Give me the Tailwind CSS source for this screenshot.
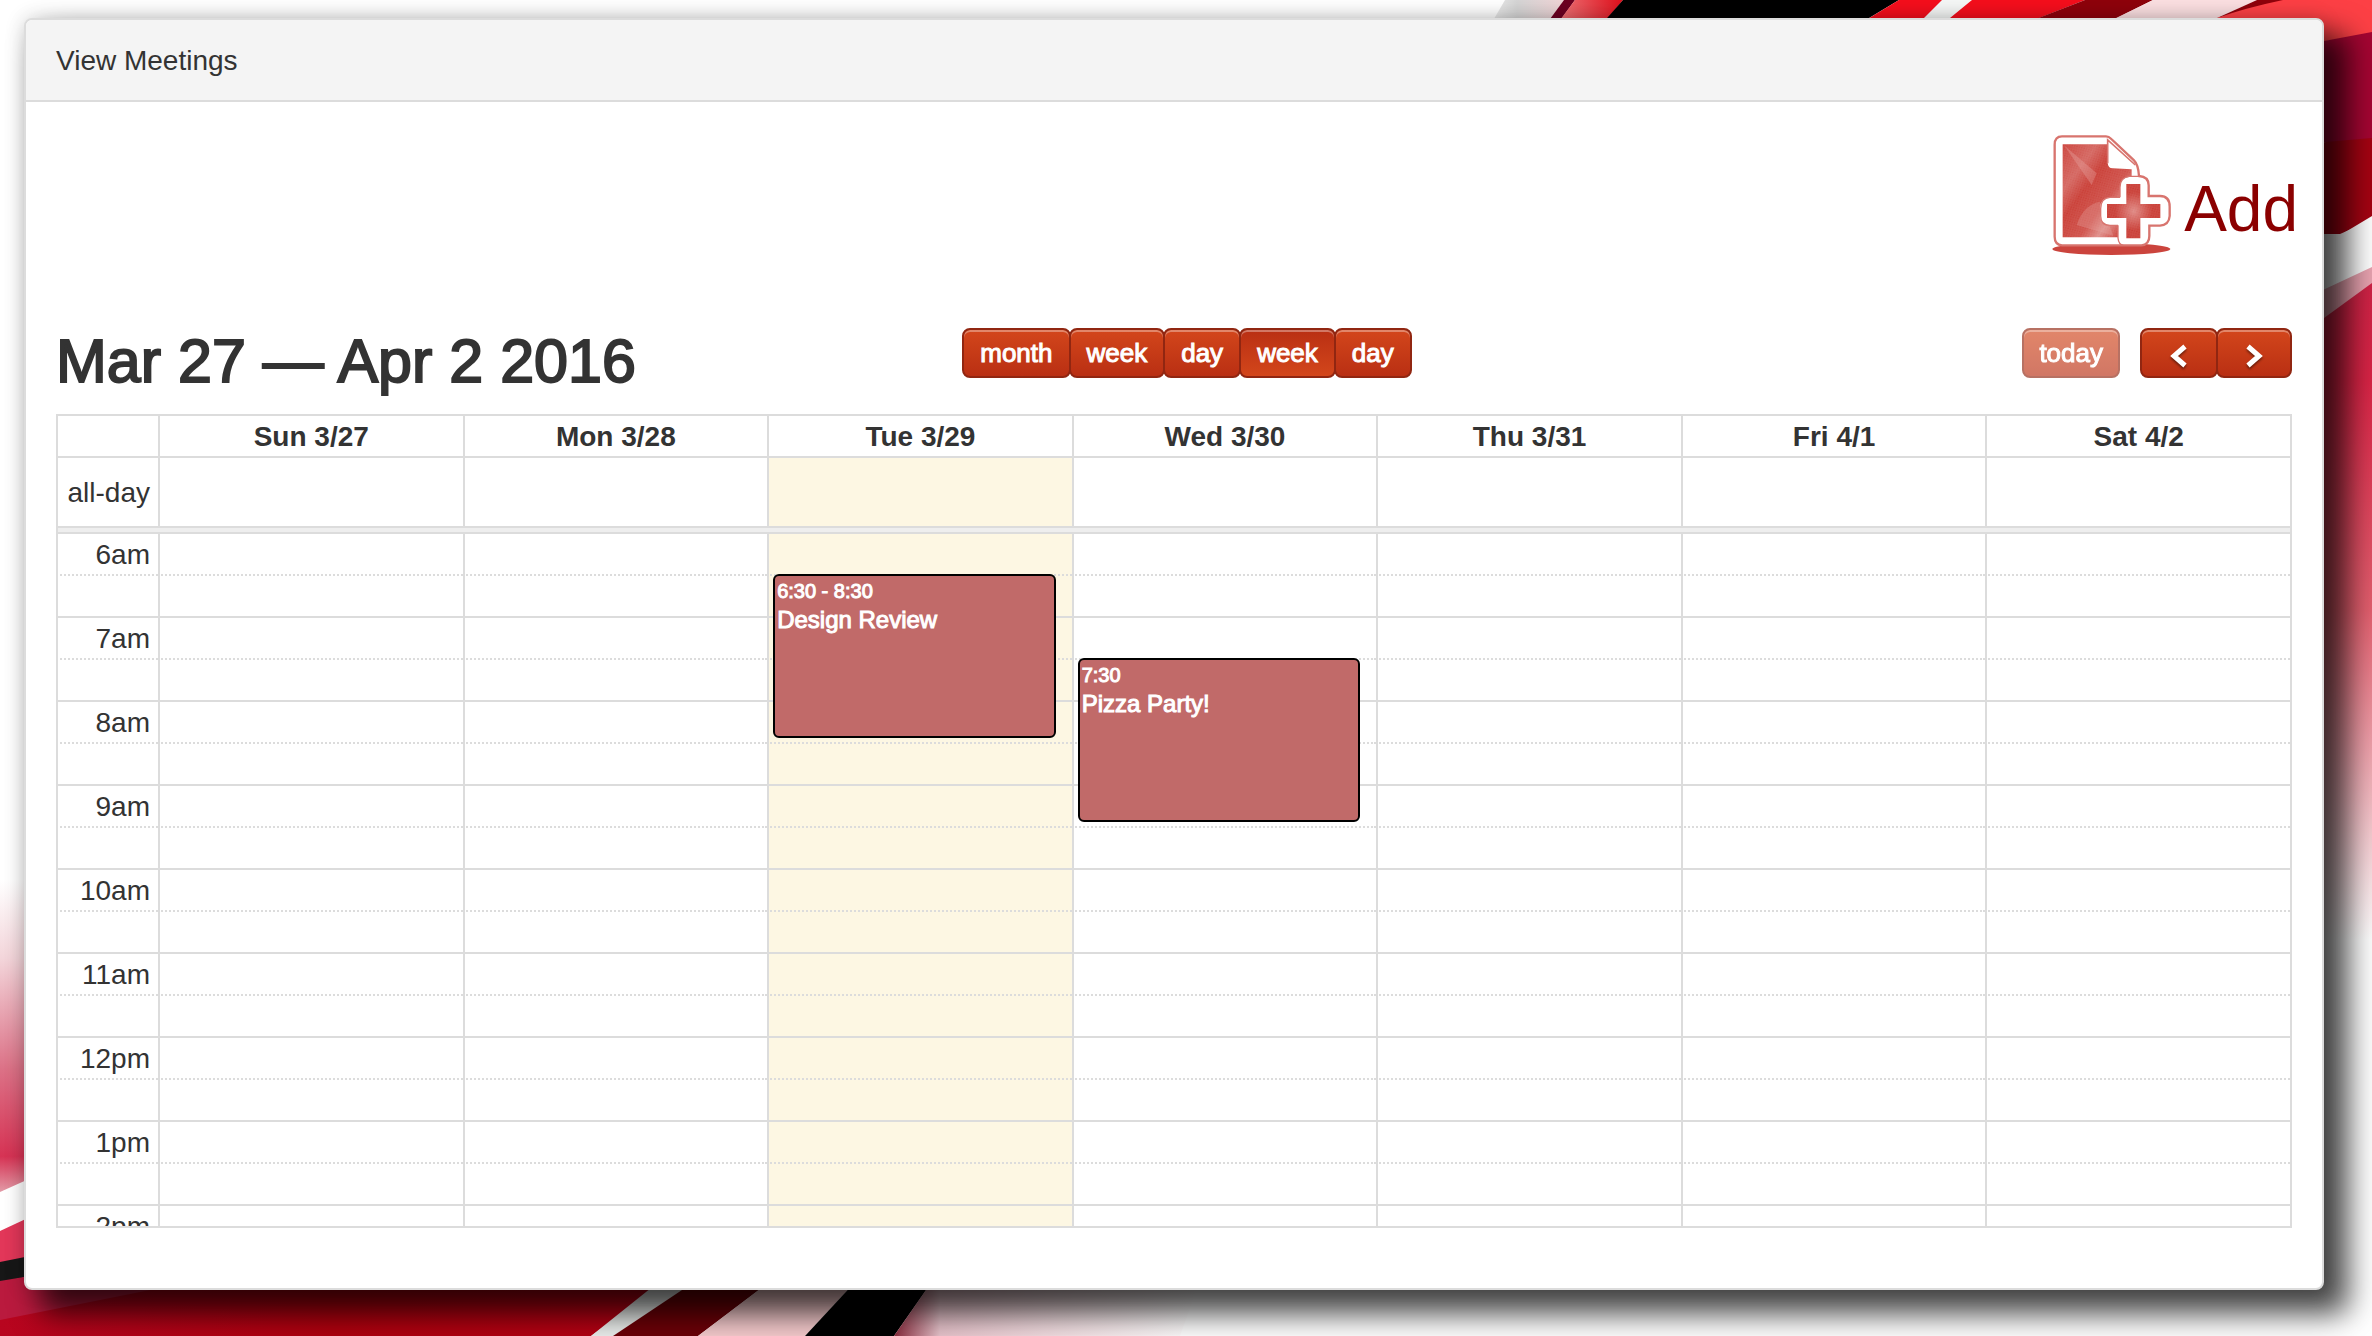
<!DOCTYPE html>
<html lang="en">
<head>
<meta charset="utf-8">
<title>View Meetings</title>
<script src="https://cdn.jsdelivr.net/npm/@tailwindcss/browser@4"></script>
</head>
<body class="relative min-h-screen bg-white font-['Liberation_Sans',Arial,sans-serif] text-[28px] text-[#333]">

<!-- Abstract ribbon wallpaper -->
<svg class="absolute inset-0 -z-10 h-full w-full" viewBox="0 0 2372 1336" preserveAspectRatio="none" aria-hidden="true">
  <defs>
    <linearGradient id="left" x1="0" y1="0" x2="0" y2="1"><stop offset="0" stop-color="#fff"/><stop offset=".25" stop-color="#f3d5da"/><stop offset=".6" stop-color="#dc7287"/><stop offset=".88" stop-color="#d63354"/><stop offset="1" stop-color="#e3a0ab"/></linearGradient>
    <linearGradient id="right" x1="0" y1="0" x2="0" y2="1"><stop offset="0" stop-color="#cf2346"/><stop offset=".15" stop-color="#da2446"/><stop offset=".5" stop-color="#e4606f"/><stop offset=".7" stop-color="#f0a0aa"/><stop offset="1" stop-color="#fff"/></linearGradient>
    <linearGradient id="top"><stop offset="0" stop-color="#f6a0a0"/><stop offset="1" stop-color="#e0101c"/></linearGradient>
    <linearGradient id="grey"><stop offset="0" stop-color="#fff"/><stop offset=".5" stop-color="#d5d5d5"/><stop offset="1" stop-color="#f0d4d6"/></linearGradient>
    <linearGradient id="bottom"><stop offset="0" stop-color="#8a2a3c"/><stop offset=".15" stop-color="#e8c4cc"/><stop offset=".5" stop-color="#f3dde1"/><stop offset="1" stop-color="#fff"/></linearGradient>
    <linearGradient id="red"><stop offset="0" stop-color="#b8051f"/><stop offset=".5" stop-color="#b0000e"/><stop offset="1" stop-color="#b50014"/></linearGradient>
  </defs>
  <path fill="url(#grey)" d="M1505 0H1564L1552 18 1520 60H1470z"/>
  <path fill="#6d0022" d="M1564 0H1575L1562 18 1530 60H1520z"/>
  <path fill="url(#top)" d="M1575 0H1623L1608 18 1570 60H1530z"/>
  <path d="M1623 0H1899L1869 18 1800 60H1570z"/>
  <path fill="#f50f1d" d="M1899 0H2085L2039 18 1930 60H1800z"/>
  <path fill="#f5f7f6" d="M1942 0H1972L1950 18 1900 60H1882z"/>
  <path fill="#8f030c" d="M2085 0H2153L2117 18 2030 60H1930z"/>
  <path fill="#fbdfe1" d="M2153 0H2257L2217 18 2120 60H2030z"/>
  <path fill="#8f030c" d="M2257 0H2300L2217 18z"/>
  <path fill="#fd4045" d="M2283 0H2372V34L2320 42 2200 60 2217 18Q2245 8 2283 0z"/>
  <path fill="#a50532" d="M2372 32V142H2280V48L2324 41z"/>
  <path fill="#a50312" d="M2280 146L2372 138V220L2340 234H2280z"/>
  <path fill="#fff" d="M2280 234H2342L2372 216V267L2280 310z"/>
  <path fill="#e9a3b0" d="M2280 310L2372 267V285L2280 350z"/>
  <path fill="url(#right)" d="M2280 350L2372 283V940H2280z"/>

  <path fill="url(#left)" d="M0 880H60V1170L0 1194z"/>
  <path fill="#fff" d="M0 1192L60 1165V1205L0 1231z"/>
  <path fill="#e23759" d="M0 1231L60 1203V1252L0 1264z"/>
  <path fill="#171717" d="M0 1262L60 1250V1271L0 1282z"/>
  <path fill="#ba1a3e" d="M0 1281L60 1271 240 1280V1300L0 1321z"/>
  <path fill="url(#red)" d="M0 1320L200 1280H668L654 1290 591 1336H0z"/>
  <path fill="#ecefed" d="M661 1280L591 1336H613L697 1280z"/>
  <path fill="#6c0007" d="M697 1280L613 1336H698L772 1280z"/>
  <path fill="#f6cbcd" d="M772 1280L698 1336H805L857 1280z"/>
  <path d="M857 1280L805 1336H894L933 1280z"/>
  <path fill="url(#bottom)" d="M933 1280L894 1336H1180L1200 1280z"/>
</svg>

<main class="pt-[18px] pr-12 pb-[46px] pl-6">
  <section class="rounded-lg border-2 border-[#dcdcdc] bg-white shadow-[20px_20px_30px_4px_rgba(0,0,0,0.72),0_0_20px_rgba(0,0,0,0.15)]">
    <header class="rounded-t-md border-b-2 border-[#dcdcdc] bg-[#f4f4f4] px-[30px] pt-[21px] pb-[19px] leading-10">View Meetings</header>

    <div class="flex h-[226px] items-start justify-end pt-7 pr-6">
      <a href="#add" class="flex items-end gap-2 text-[64px] leading-[98px] text-[#8b0000]">
        <svg class="size-32" viewBox="204 60 384 384" aria-hidden="true">
          <defs>
            <linearGradient id="sheet" x1="0" y1="0" x2="1" y2="1"><stop offset="0" stop-color="#cb4039"/><stop offset=".25" stop-color="#d4655f"/><stop offset=".4" stop-color="#c93d35"/><stop offset=".62" stop-color="#cf4f48"/><stop offset=".75" stop-color="#df8d88"/><stop offset=".9" stop-color="#cb4039"/></linearGradient>
            <radialGradient id="cross"><stop offset="0" stop-color="#df8782"/><stop offset=".7" stop-color="#c93d35"/></radialGradient>
            <pattern id="grain" width="7" height="7" patternUnits="userSpaceOnUse" patternTransform="rotate(35)"><path d="M0 2H4M3 5H7" stroke="#fff" stroke-opacity=".22" stroke-width="1.5"/></pattern>
          </defs>
          <ellipse cx="394" cy="417" rx="177" ry="18" fill="#cb443d"/>
          <path d="M246 79H378Q386 79 394 87L462 151Q475 164 477 198Q506 200 506 226V258H540Q569 258 569 290V318Q567 345 540 347H508V378Q508 404 484 406H246Q224 404 224 380V104Q224 79 246 79z" fill="#fff" stroke="#d8746e" stroke-width="7"/>
          <path d="M248 103H383V160Q384 175 398 175L455 178V200Q420 200 420 232V262H390Q360 264 360 296V318Q362 346 390 346H414V382H248z" fill="url(#sheet)"/>
          <path d="M248 103H383V160Q384 175 398 175L455 178V200Q420 200 420 232V262H390Q360 264 360 296V318Q362 346 390 346H414V382H248z" fill="url(#grain)"/>
          <path d="M252 106L335 225 350 190z" fill="#e9aaa6" opacity=".35"/>
          <path d="M290 345Q310 285 360 275V318Q362 346 390 350L400 378z" fill="#e9aaa6" opacity=".3"/>
          <path d="M383 94L462 170Q430 176 398 172Q386 170 386 160z" fill="#fff"/>
          <path d="M383 160V90L466 165" fill="none" stroke="#d8746e" stroke-width="5"/>
          <path d="M414 346V384Q416 404 430 406M420 262V232Q420 202 448 199H477M420 262H390Q362 264 362 296V318Q362 346 390 346H414" fill="none" stroke="#d8746e" stroke-width="4"/>
          <path d="M439 222H481V282H541V324H481V385H439V324H381V282H439z" fill="url(#cross)"/>
          <path d="M439 222H481V282H541V324H481V385H439V324H381V282H439z" fill="url(#grain)"/>
        </svg>
        Add
      </a>
    </div>

    <div class="px-[30px] pb-[60px]">
      <div class="grid h-[86px] grid-cols-[1fr_auto_1fr] items-start">
        <h2 class="text-[61px] leading-[66px] whitespace-nowrap [-webkit-text-stroke:2px_#333]">Mar 27 — Apr 2 2016</h2>
        <div class="flex pl-[26px] text-[26px] leading-[46px] text-white [text-shadow:0_2px_2px_rgba(0,0,0,0.5)]">
          <button class="rounded-lg border-2 border-[#912611] bg-linear-to-b from-[#d3461b] to-[#b92f13] px-4 shadow-[inset_0_2px_0_rgba(255,255,255,0.35)] [-webkit-text-stroke:1px_white]">month</button>
          <button class="-ml-0.5 rounded-lg border-2 border-[#912611] bg-linear-to-b from-[#d3461b] to-[#b92f13] px-4 shadow-[inset_0_2px_0_rgba(255,255,255,0.35)] [-webkit-text-stroke:1px_white]">week</button>
          <button class="-ml-0.5 rounded-lg border-2 border-[#912611] bg-linear-to-b from-[#d3461b] to-[#b92f13] px-4 shadow-[inset_0_2px_0_rgba(255,255,255,0.35)] [-webkit-text-stroke:1px_white]">day</button>
          <button class="-ml-0.5 rounded-lg border-2 border-[#912611] bg-linear-to-b from-[#b92f13] to-[#d3461b] px-4 shadow-[inset_0_2px_0_rgba(255,255,255,0.35)] [-webkit-text-stroke:1px_white]">week</button>
          <button class="-ml-0.5 rounded-lg border-2 border-[#912611] bg-linear-to-b from-[#d3461b] to-[#b92f13] px-4 shadow-[inset_0_2px_0_rgba(255,255,255,0.35)] [-webkit-text-stroke:1px_white]">day</button>
        </div>
        <div class="flex justify-end text-[26px] leading-[46px] text-white [text-shadow:0_2px_2px_rgba(0,0,0,0.5)]">
          <button class="mr-5 rounded-lg border-2 border-[#912611] bg-linear-to-b from-[#d3461b] to-[#b92f13] px-[15px] opacity-65 shadow-[inset_0_2px_0_rgba(255,255,255,0.35)] [-webkit-text-stroke:1px_white]" disabled>today</button>
          <button aria-label="Previous week" class="flex h-[50px] w-[78px] items-center justify-center rounded-lg border-2 border-[#912611] bg-linear-to-b from-[#d3461b] to-[#b92f13] pt-1.5 shadow-[inset_0_2px_0_rgba(255,255,255,0.35)]">
            <svg class="h-6 w-5 drop-shadow-[0_2px_1px_rgba(0,0,0,0.45)]" viewBox="0 0 20 24" fill="none" stroke="#fff" stroke-width="5" aria-hidden="true"><path d="M16 2.500L5 12L16 21.500"/></svg>
          </button>
          <button aria-label="Next week" class="-ml-0.5 flex h-[50px] w-[76px] items-center justify-center rounded-lg border-2 border-[#912611] bg-linear-to-b from-[#d3461b] to-[#b92f13] pt-1.5 shadow-[inset_0_2px_0_rgba(255,255,255,0.35)]">
            <svg class="h-6 w-5 drop-shadow-[0_2px_1px_rgba(0,0,0,0.45)]" viewBox="0 0 20 24" fill="none" stroke="#fff" stroke-width="5" aria-hidden="true"><path d="M4 2.500L15 12L4 21.500"/></svg>
          </button>
        </div>
      </div>

      <!-- Week agenda: the day grid is cut off at its viewport height -->
      <div class="h-[814px] overflow-hidden border-b-2 border-[#dcdcdc]">
        <table class="w-full table-fixed border-separate border-spacing-0 border-r-2 border-[#dcdcdc] leading-[38px] [&_td]:relative [&_td]:border-t-2 [&_td]:border-l-2 [&_td]:border-[#dcdcdc] [&_td]:p-0 [&_th]:border-t-2 [&_th]:border-l-2 [&_th]:border-[#dcdcdc] [&_th]:p-0 [&_th:not([colspan])]:pt-0.5 [&_tbody_th]:pr-2 [&_tbody_th]:text-right [&_tbody_th]:font-normal [&_td:nth-child(4)]:bg-[#fdf7e3] [&_.slots>tr]:h-[42px] [&_.slots>tr:nth-child(even)>*]:[border-top-style:dotted]">
          <colgroup><col class="w-[102px]"><col><col><col><col><col><col><col></colgroup>
          <thead>
            <tr class="h-[42px]"><td></td><th>Sun 3/27</th><th>Mon 3/28</th><th>Tue 3/29</th><th>Wed 3/30</th><th>Thu 3/31</th><th>Fri 4/1</th><th>Sat 4/2</th></tr>
          </thead>
          <tbody>
            <tr class="h-[70px]"><th scope="row">all-day</th><td></td><td></td><td></td><td></td><td></td><td></td><td></td></tr>
            <tr><th colspan="8" class="h-1.5 bg-[#eee]"></th></tr>
          </tbody>
          <tbody class="slots">
            <tr><th scope="row">6am</th><td></td><td></td><td></td><td></td><td></td><td></td><td></td></tr>
            <tr><th></th><td></td><td></td>
              <td>
                <a href="#design-review" class="absolute -top-0.5 right-4 left-1 z-10 h-[164px] rounded-md border-2 border-black bg-[#c16a69] pl-0.5 text-white">
                  <span class="block text-[20px] leading-[30px] [-webkit-text-stroke:1px_white]">6:30 - 8:30</span>
                  <span class="block text-[24px] leading-7 [-webkit-text-stroke:1px_white]">Design Review</span>
                </a>
              </td>
              <td></td><td></td><td></td><td></td></tr>
            <tr><th scope="row">7am</th><td></td><td></td><td></td><td></td><td></td><td></td><td></td></tr>
            <tr><th></th><td></td><td></td><td></td>
              <td>
                <a href="#pizza-party" class="absolute -top-0.5 right-4 left-1 z-10 h-[164px] rounded-md border-2 border-black bg-[#c16a69] pl-0.5 text-white">
                  <span class="block text-[20px] leading-[30px] [-webkit-text-stroke:1px_white]">7:30</span>
                  <span class="block text-[24px] leading-7 [-webkit-text-stroke:1px_white]">Pizza Party!</span>
                </a>
              </td>
              <td></td><td></td><td></td></tr>
            <tr><th scope="row">8am</th><td></td><td></td><td></td><td></td><td></td><td></td><td></td></tr>
            <tr><th></th><td></td><td></td><td></td><td></td><td></td><td></td><td></td></tr>
            <tr><th scope="row">9am</th><td></td><td></td><td></td><td></td><td></td><td></td><td></td></tr>
            <tr><th></th><td></td><td></td><td></td><td></td><td></td><td></td><td></td></tr>
            <tr><th scope="row">10am</th><td></td><td></td><td></td><td></td><td></td><td></td><td></td></tr>
            <tr><th></th><td></td><td></td><td></td><td></td><td></td><td></td><td></td></tr>
            <tr><th scope="row">11am</th><td></td><td></td><td></td><td></td><td></td><td></td><td></td></tr>
            <tr><th></th><td></td><td></td><td></td><td></td><td></td><td></td><td></td></tr>
            <tr><th scope="row">12pm</th><td></td><td></td><td></td><td></td><td></td><td></td><td></td></tr>
            <tr><th></th><td></td><td></td><td></td><td></td><td></td><td></td><td></td></tr>
            <tr><th scope="row">1pm</th><td></td><td></td><td></td><td></td><td></td><td></td><td></td></tr>
            <tr><th></th><td></td><td></td><td></td><td></td><td></td><td></td><td></td></tr>
            <tr><th scope="row">2pm</th><td></td><td></td><td></td><td></td><td></td><td></td><td></td></tr>
          </tbody>
        </table>
      </div>
    </div>
  </section>
</main>
</body>
</html>
